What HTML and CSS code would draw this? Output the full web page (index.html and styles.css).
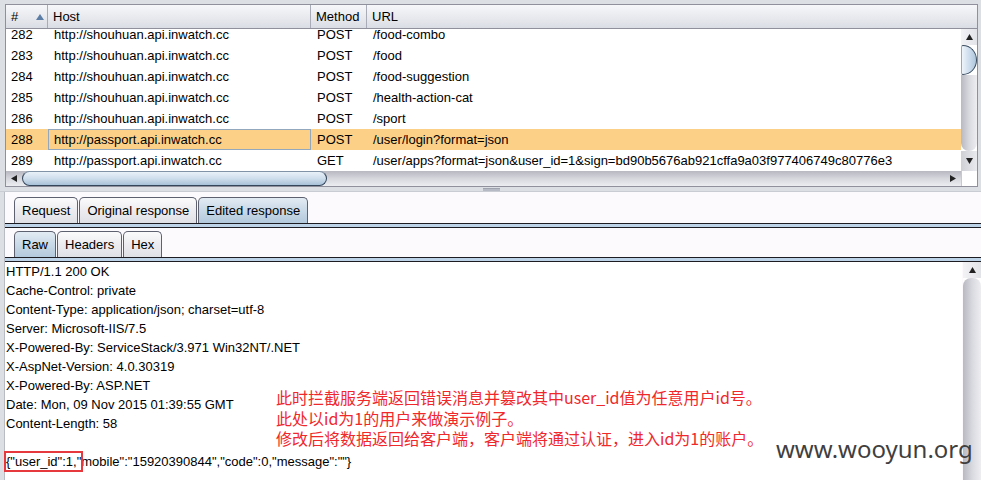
FILE: index.html
```html
<!DOCTYPE html>
<html lang="en">

<head>
    <meta charset="UTF-8">
    <meta name="viewport" content="width=device-width, initial-scale=1.0">
    <title>Proxy history</title>
    <link rel="stylesheet" href="styles.css">
</head>

<body>
    <section class="window">
        <!-- history table -->
        <div class="history">
            <div class="history_head">
                <div class="hcell c_num">#
                    <svg class="sort" width="8" height="6" viewBox="0 0 8 6"><path d="M0 6L4 0L8 6Z" fill="#5c7da6"/></svg>
                </div>
                <div class="hcell c_host">Host</div>
                <div class="hcell c_method">Method</div>
                <div class="hcell c_url">URL</div>
            </div>
            <div class="history_main">
                <div class="history_view">
                    <div class="history_rows">
                        <div class="row"><span class="cell c_num">282</span><span class="cell c_host">http://shouhuan.api.inwatch.cc</span><span class="cell c_method">POST</span><span class="cell c_url">/food-combo</span></div>
                        <div class="row"><span class="cell c_num">283</span><span class="cell c_host">http://shouhuan.api.inwatch.cc</span><span class="cell c_method">POST</span><span class="cell c_url">/food</span></div>
                        <div class="row"><span class="cell c_num">284</span><span class="cell c_host">http://shouhuan.api.inwatch.cc</span><span class="cell c_method">POST</span><span class="cell c_url">/food-suggestion</span></div>
                        <div class="row"><span class="cell c_num">285</span><span class="cell c_host">http://shouhuan.api.inwatch.cc</span><span class="cell c_method">POST</span><span class="cell c_url">/health-action-cat</span></div>
                        <div class="row"><span class="cell c_num">286</span><span class="cell c_host">http://shouhuan.api.inwatch.cc</span><span class="cell c_method">POST</span><span class="cell c_url">/sport</span></div>
                        <div class="row row_selected"><span class="cell c_num">288</span><span class="cell c_host cell_focus">http://passport.api.inwatch.cc</span><span class="cell c_method">POST</span><span class="cell c_url">/user/login?format=json</span></div>
                        <div class="row"><span class="cell c_num">289</span><span class="cell c_host">http://passport.api.inwatch.cc</span><span class="cell c_method">GET</span><span class="cell c_url">/user/apps?format=json&amp;user_id=1&amp;sign=bd90b5676ab921cffa9a03f977406749c80776e3</span></div>
                    </div>
                </div>
                <div class="vbar">
                    <span class="vbar_btn"><svg width="7" height="6" viewBox="0 0 7 6"><path d="M0 6L3.5 0L7 6Z" fill="#222"/></svg></span>
                    <span class="vbar_thumb"></span>
                    <span class="vbar_track"></span>
                    <span class="vbar_btn vbar_btn_down"><svg width="7" height="6" viewBox="0 0 7 6"><path d="M0 0L3.5 6L7 0Z" fill="#222"/></svg></span>
                </div>
            </div>
            <div class="history_foot">
                <div class="hbar">
                    <span class="hbar_btn"><svg width="6" height="7" viewBox="0 0 6 7"><path d="M6 0L0 3.5L6 7Z" fill="#222"/></svg></span>
                    <span class="hbar_thumb"></span>
                    <span class="hbar_track"></span>
                    <span class="hbar_btn"><svg width="6" height="7" viewBox="0 0 6 7"><path d="M0 0L6 3.5L0 7Z" fill="#222"/></svg></span>
                </div>
                <div class="corner"></div>
            </div>
        </div>

        <div class="splitter"><span class="grip"></span></div>

        <!-- message editor -->
        <div class="detail">
            <div class="tabs">
                <span class="tab">Request</span>
                <span class="tab">Original response</span>
                <span class="tab tab_active">Edited response</span>
            </div>
            <div class="tab_rule"></div>
            <div class="tabs tabs_sub">
                <span class="tab tab_active">Raw</span>
                <span class="tab">Headers</span>
                <span class="tab">Hex</span>
            </div>
            <div class="tab_rule"></div>
            <div class="viewer">
                <div class="raw">
                    <div>HTTP/1.1 200 OK</div>
                    <div>Cache-Control: private</div>
                    <div>Content-Type: application/json; charset=utf-8</div>
                    <div>Server: Microsoft-IIS/7.5</div>
                    <div>X-Powered-By: ServiceStack/3.971 Win32NT/.NET</div>
                    <div>X-AspNet-Version: 4.0.30319</div>
                    <div>X-Powered-By: ASP.NET</div>
                    <div>Date: Mon, 09 Nov 2015 01:39:55 GMT</div>
                    <div>Content-Length: 58</div>
                    <div>&nbsp;</div>
                    <div><span class="hit">{"user_id":1,"</span>mobile":"15920390844","code":0,"message":""}</div>
                </div>
                <div class="vbar vbar_tall">
                    <span class="vbar_btn"><svg width="7" height="6" viewBox="0 0 7 6"><path d="M0 6L3.5 0L7 6Z" fill="#222"/></svg></span>
                    <span class="vbar_track vbar_track_full"></span>
                </div>
            </div>
        </div>

        <!-- screenshot notes -->
        <div class="note">
            <div>此时拦截服务端返回错误消息并篡改其中user_id值为任意用户id号。</div>
            <div>此处以id为1的用户来做演示例子。</div>
            <div>修改后将数据返回给客户端，客户端将通过认证，进入id为1的账户。</div>
        </div>
        <div class="watermark">www.wooyun.org</div>
    </section>
</body>

</html>
```

FILE: styles.css
```css
body {
    margin: 0;
}

.window {
    position: relative;
    width: 981px;
    height: 480px;
    overflow: hidden;
    background: #dcdfe3;
    font-family: "Liberation Sans", Arial, sans-serif;
    font-size: 13px;
    color: #000;
    padding-top: 4px;
    box-sizing: border-box;
    display: flex;
    flex-direction: column;
}

/* ---------- history table ---------- */

.history {
    margin: 0 3px 0 5px;
    border: 1px solid #8f909c;
    background: #fff;
    display: flex;
    flex-direction: column;
}

.history_head {
    display: flex;
    height: 24px;
    box-sizing: border-box;
    border-bottom: 1px solid #8f909c;
    background: linear-gradient(#f6f7f9, #e6e8ed 60%, #dadde4);
}

.hcell {
    box-sizing: border-box;
    padding-left: 5px;
    line-height: 23px;
    border-right: 1px solid #a9abb6;
    display: flex;
    align-items: center;
}

.hcell.c_url {
    border-right: none;
    flex: 1;
}

.sort {
    margin-left: auto;
    margin-right: 3px;
}

.c_num {
    width: 42px;
}

.c_host {
    width: 263px;
}

.c_method {
    width: 56px;
}

.c_url {
    flex: 1;
}

.history_main {
    display: flex;
    height: 142px;
}

.history_view {
    flex: 1;
    overflow: hidden;
}

.history_rows {
    margin-top: -5px;
}

.row {
    display: flex;
    height: 21px;
    line-height: 21px;
    white-space: nowrap;
}

.cell {
    box-sizing: border-box;
    padding-left: 6px;
    overflow: hidden;
}

.cell.c_num {
    padding-left: 5px;
}

.row_selected {
    background: #fdd087;
}

.cell_focus {
    border: 1px solid #93a7bd;
    line-height: 19px;
    padding-left: 5px;
}

/* scrollbars */

.vbar {
    width: 16px;
    display: flex;
    flex-direction: column;
    background: #fff;
}

.vbar_btn {
    height: 16px;
    display: flex;
    align-items: center;
    justify-content: center;
    background: linear-gradient(90deg, #f3f3f6, #e2e3e8);
}

.vbar_btn_down {
    height: 20px;
    background: linear-gradient(90deg, #cfd0d6, #e9eaee);
}

.vbar_thumb {
    height: 30px;
    box-sizing: border-box;
    border: 1px solid #3a4b5e;
    border-left-color: #9aa8b8;
    border-radius: 2px 14px 14px 2px / 2px 15px 15px 2px;
    background: linear-gradient(90deg, #eef4fa, #c7d9ea 60%, #aec6dc);
}

.vbar_track {
    flex: 1;
    background: linear-gradient(90deg, #b8b9c1, #d8d9df 50%, #eeeef1);
    border-radius: 0 0 8px 8px;
}

.vbar_track_full {
    border-radius: 8px 8px 0 0;
}

.history_foot {
    display: flex;
    height: 15px;
}

.hbar {
    flex: 1;
    display: flex;
    background: linear-gradient(#b7b8c0, #d6d7dd 50%, #ecedf0);
}

.hbar_btn {
    width: 16px;
    display: flex;
    align-items: center;
    justify-content: center;
}

.hbar_thumb {
    width: 305px;
    box-sizing: border-box;
    border: 1px solid #34465a;
    border-top-color: #8193a6;
    border-radius: 8px;
    background: linear-gradient(#e9f1f8, #cfdeec 50%, #a8c1d8);
}

.hbar_track {
    flex: 1;
}

.corner {
    width: 16px;
    background: #fff;
    border-left: 1px solid #c8c9d0;
    box-sizing: border-box;
}

/* ---------- splitter ---------- */

.splitter {
    height: 5px;
    display: flex;
    justify-content: center;
    align-items: center;
    border-bottom: 1px solid #c9ccd2;
    box-sizing: border-box;
}

.grip {
    width: 17px;
    height: 2px;
    margin-left: 2px;
    background: #b6bac4;
    border-top: 1px solid #9ea3ae;
}

/* ---------- editor ---------- */

.detail {
    flex: 1;
    margin-left: 4px;
    background: #fdfafd;
    padding-top: 5px;
    display: flex;
    flex-direction: column;
    border-left: 1px solid #b9bcc3;
    box-sizing: border-box;
}

.tabs {
    display: flex;
    gap: 1px;
    padding-left: 9px;
    height: 26px;
}

.tabs_sub {
    margin-top: 3px;
}

.tab {
    box-sizing: border-box;
    padding: 0 7px;
    line-height: 25px;
    border: 1px solid #5e6270;
    border-bottom: none;
    border-radius: 5px 5px 0 0;
    background: linear-gradient(#fbfbfc, #ececf0 50%, #dfe0e6);
}

.tab_active {
    background: linear-gradient(#e2ebf3, #c9d9e7 50%, #b3c9dc);
}

.tab_rule {
    height: 3px;
    border-top: 1px solid #1c1c22;
    border-bottom: 1px solid #1c1c22;
    background: #bdd3e7;
}

.viewer {
    flex: 1;
    display: flex;
}

.raw {
    flex: 1;
    background: #fff;
    padding-left: 1px;
    line-height: 19px;
    white-space: nowrap;
}

.hit {
    outline: 2px solid #e5393d;
    padding: 1px 0;
}

.vbar_tall {
    width: 18px;
    margin-left: 1px;
    background: #fff;
}

/* ---------- overlays ---------- */

.note {
    position: absolute;
    left: 276px;
    top: 387px;
    font-family: "Noto Sans CJK SC", "Noto Sans", sans-serif;
    font-size: 16px;
    line-height: 20.5px;
    color: #f0282c;
    white-space: nowrap;
}

.watermark {
    position: absolute;
    left: 776px;
    top: 437px;
    font-family: "Noto Sans", sans-serif;
    font-size: 24px;
    line-height: 24px;
    color: #3f3f3f;
}
```
